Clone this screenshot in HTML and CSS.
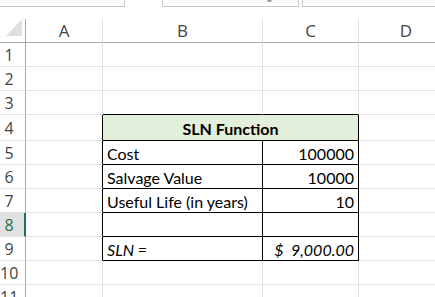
FILE: index.html
```html
<!DOCTYPE html>
<html lang="en">
<head>
  <meta charset="UTF-8">
  <title>SLN Function</title>
  <link rel="stylesheet" href="styles.css">
</head>
<body>
  <div class="toolbar">
    <div class="tool-box name-box"></div>
    <div class="tool-box font-box"><span class="drop-dot"></span></div>
    <div class="tool-box size-box"></div>
  </div>
  <div class="sheet">
    <!-- header row -->
    <div class="corner">
      <svg width="25" height="23" viewBox="0 0 25 23"><polygon points="22,0 22,17 6,17" fill="#dfdfdf"/></svg>
    </div>
    <div class="col-head">A</div>
    <div class="col-head">B</div>
    <div class="col-head">C</div>
    <div class="col-head last">D</div>

    <div class="row-head"><span>1</span></div>
    <div class="cell"></div><div class="cell"></div><div class="cell"></div><div class="cell"></div>

    <div class="row-head"><span>2</span></div>
    <div class="cell"></div><div class="cell"></div><div class="cell"></div><div class="cell"></div>

    <div class="row-head"><span>3</span></div>
    <div class="cell"></div><div class="cell t-top"></div><div class="cell t-top"></div><div class="cell"></div>

    <div class="row-head"><span>4</span></div>
    <div class="cell t-left"></div>
    <div class="cell t-cell t-title">SLN Function</div>
    <div class="cell"></div>

    <div class="row-head"><span>5</span></div>
    <div class="cell t-left"></div>
    <div class="cell t-cell">Cost</div>
    <div class="cell t-cell num">100000</div>
    <div class="cell"></div>

    <div class="row-head"><span>6</span></div>
    <div class="cell t-left"></div>
    <div class="cell t-cell">Salvage Value</div>
    <div class="cell t-cell num">10000</div>
    <div class="cell"></div>

    <div class="row-head"><span>7</span></div>
    <div class="cell t-left"></div>
    <div class="cell t-cell">Useful Life (in years)</div>
    <div class="cell t-cell num">10</div>
    <div class="cell"></div>

    <div class="row-head selected"><span>8</span></div>
    <div class="cell t-left"></div>
    <div class="cell t-cell"></div>
    <div class="cell t-cell"></div>
    <div class="cell"></div>

    <div class="row-head"><span>9</span></div>
    <div class="cell t-left"></div>
    <div class="cell t-cell ital">SLN =</div>
    <div class="cell t-cell ital num">$&nbsp; 9,000.00</div>
    <div class="cell"></div>

    <div class="row-head"><span>10</span></div>
    <div class="cell"></div><div class="cell"></div><div class="cell"></div><div class="cell"></div>

    <div class="row-head"><span>11</span></div>
    <div class="cell"></div><div class="cell"></div><div class="cell"></div><div class="cell"></div>
  </div>
</body>
</html>
```

FILE: styles.css
```css
body {
  margin: 0;
  width: 435px;
  height: 297px;
  overflow: hidden;
  background: #fff;
  font-family: 'Lato', 'Liberation Sans', sans-serif;
  color: #000;
}
.toolbar {
  display: flex;
  height: 7px;
  margin-bottom: 12px;
}
.tool-box {
  box-sizing: border-box;
  flex-shrink: 0;
  height: 7px;
  border: 1px solid #c6c6c6;
  border-top: none;
  background: #fdfdfd;
  position: relative;
}
.name-box {
  margin-left: -1px;
  width: 126px;
}
.font-box {
  margin-left: 37px;
  width: 137px;
}
.size-box {
  margin-left: 3px;
  width: 140px;
}
.drop-dot {
  position: absolute;
  left: 104px;
  top: 0;
  width: 5px;
  height: 2px;
  border-radius: 0 0 3px 3px;
  background: #9a9a9a;
}
.sheet {
  display: grid;
  width: 453px;
  grid-template-columns: 26px 77px 160px 96px 94px;
  grid-template-rows: 24px 24px 24px 24px 26px repeat(7, 24px);
}
.sheet > div {
  box-sizing: border-box;
}
.corner {
  border-right: 1px solid #ababab;
  border-bottom: 1px solid #ababab;
}
.corner svg {
  display: block;
}
.col-head {
  border-right: 1px solid #e1e1e1;
  border-bottom: 1px solid #ababab;
  font-family: 'Open Sans', 'Noto Sans', sans-serif;
  font-size: 17px;
  color: #444;
  display: flex;
  align-items: center;
  justify-content: center;
}
.col-head.last {
  border-right: none;
}
.row-head {
  border-right: 1px solid #ababab;
  border-bottom: 1px solid #e1e1e1;
  font-family: 'Open Sans', 'Noto Sans', sans-serif;
  font-size: 16px;
  color: #444;
  display: flex;
  align-items: center;
}
.row-head span {
  width: 18px;
  text-align: center;
}
.row-head.selected {
  background: #e1e1e1;
  border-right: 2px solid #217346;
  color: #217346;
}
.cell {
  border-right: 1px solid #e1e1e1;
  border-bottom: 1px solid #e1e1e1;
  font-size: 16px;
  display: flex;
  align-items: center;
  padding: 1px 4px 0 4px;
  white-space: nowrap;
}
.t-top {
  border-bottom-color: #000;
}
.t-left {
  border-right-color: #000;
}
.t-cell {
  border-right-color: #000;
  border-bottom-color: #000;
}
.t-title {
  grid-column: span 2;
  background: #e2efda;
  font-weight: 700;
  justify-content: center;
}
.num {
  justify-content: flex-end;
}
.ital {
  font-style: italic;
}
```
